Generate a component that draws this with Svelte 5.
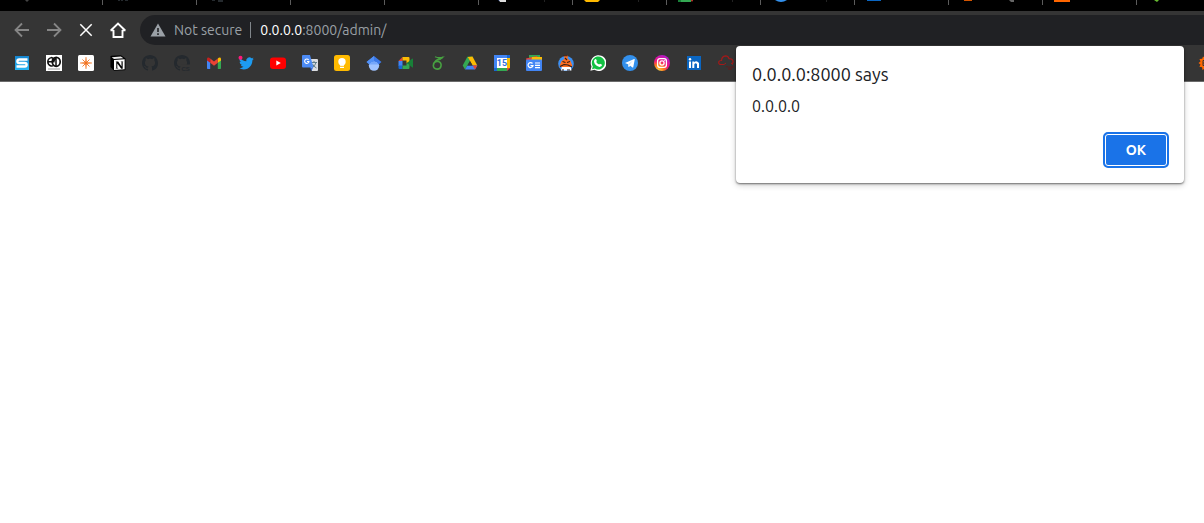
<script>
  const github = 'M8 0C3.58 0 0 3.58 0 8c0 3.54 2.29 6.53 5.47 7.59.4.07.55-.17.55-.38 0-.19-.01-.82-.01-1.49-2.01.37-2.53-.49-2.69-.94-.09-.23-.48-.94-.82-1.13-.28-.15-.68-.52-.01-.53.63-.01 1.08.58 1.23.82.72 1.21 1.87.87 2.33.66.07-.52.28-.87.51-1.07-1.78-.2-3.64-.89-3.64-3.95 0-.87.31-1.59.82-2.15-.08-.2-.36-1.02.08-2.12 0 0 .67-.21 2.2.82.64-.18 1.32-.27 2-.27s1.36.09 2 .27c1.53-1.04 2.2-.82 2.2-.82.44 1.1.16 1.92.08 2.12.51.56.82 1.27.82 2.15 0 3.07-1.87 3.75-3.65 3.95.29.25.54.73.54 1.48 0 1.07-.01 1.93-.01 2.2 0 .21.15.46.55.38A8.01 8.01 0 0 0 16 8c0-4.42-3.58-8-8-8z';

  const bookmarks = [
    ['SigmaStudio', '<defs><linearGradient id="sky" x2="0" y2="1"><stop stop-color="#1685cf"/><stop offset="1" stop-color="#27b5f5"/></linearGradient></defs><rect x="1" y="1" width="14" height="14" fill="url(#sky)"/><path d="M13.500 4.500H5.200Q3.400 4.500 3.400 6.200t1.800 1.800h5.600q1.800 0 1.800 1.800t-1.800 1.700H2.500" fill="none" stroke="#fff" stroke-width="2.400"/>'],
    ['Monogram', '<rect width="16" height="16" fill="#fff"/><g fill="none" stroke="#111"><ellipse cx="10.200" cy="6.800" rx="4" ry="4.500" stroke-width="1.700"/><path d="M7.500 10.500Q6.500 11.300 5 11 1.800 10 1.800 6.800T5.300 2.600Q8 2.800 7.800 6.800H2M8 6.500Q8 4 10 3v8" stroke-width="1.500"/></g><path d="M2 14h12" stroke="#999" stroke-width="1"/>'],
    ['Spark', '<rect width="16" height="16" rx="1.500" fill="#fff"/><path d="M8 2l.7 5.300L14 8l-5.300.7L8 14l-.7-5.300L2 8l5.300-.7z" fill="#f2711c" stroke="#f2711c" stroke-width=".4"/><path d="M4.500 4.500l7 7M11.500 4.500l-7 7" stroke="#f2711c" stroke-width=".9"/>'],
    ['Notion', '<path d="M.5 1.500Q.5.900 1.500.8L11 .3 15.500 3.500V14.300q0 .8-1 .9L4 15.800.5 12z" fill="#000"/><path d="M1.700 2.200 10.800 1.500 13.500 3.200 4 3.900z" fill="#eee"/><path d="M4 5 14.600 4.300v10L4 15z" fill="#fff"/><path d="M5.500 6.500h2.700l3.300 5V7l-1.200-.5h3.200l-.8.600v6.600h-1.500L7.300 8.500v4.300l1.200.600H5.500l.8-.6V7z" fill="#000"/>'],
    ['GitHub', `<path d="${github}" fill="#24292e"/>`],
    ['GitHub Classroom', `<path d="${github}" fill="#24292e"/><path d="M7 9.500H16V16H7z" fill="#353535"/><text x="7.500" y="15.500" font-size="6" font-weight="700" font-family="Liberation Sans, sans-serif" fill="#24292e">CS</text>`],
    ['Gmail', '<path d="M1 4v9.200q0 .8.800.8h2.400V7z" fill="#4285f4"/><path d="M11.800 7v7h2.400q.8 0 .8-.8V4z" fill="#34a853"/><path d="M11.800 3.600v4.200L15 5.400V4c0-1.700-1.700-2.300-3.200-.4z" fill="#fbbc04"/><path d="M4.200 7.800V3.600L8 6.500l3.800-2.900v4.200L8 10.700z" fill="#ea4335"/><path d="M1 4v1.400l3.200 2.400V3.600C2.700 1.700 1 2.300 1 4z" fill="#c5221f"/>'],
    ['Twitter', '<g transform="translate(1 1) scale(.62)"><path d="M23.950 4.570a10 10 0 0 1-2.820.770 4.960 4.960 0 0 0 2.160-2.720c-.95.560-2 .960-3.130 1.180a4.920 4.920 0 0 0-8.380 4.480C7.690 8.100 4.070 6.130 1.640 3.160a4.820 4.820 0 0 0-.67 2.470c0 1.710.87 3.210 2.190 4.100a4.900 4.900 0 0 1-2.230-.62v.06a4.920 4.920 0 0 0 3.950 4.830 5 5 0 0 1-2.210.08 4.940 4.940 0 0 0 4.600 3.420A9.870 9.870 0 0 1 0 19.540a14 14 0 0 0 7.560 2.210c9.050 0 14-7.500 14-13.980l-.02-.63a9.940 9.940 0 0 0 2.410-2.570z" fill="#1d9bf0"/></g><circle cx="2.500" cy="2.700" r="2" fill="#ff1979"/>'],
    ['YouTube', '<rect y="2.500" width="16" height="11.500" rx="3" fill="#f00"/><path d="M6.300 5.600v5L10.800 8z" fill="#fff"/>'],
    ['Translate', '<path d="M6 4h9q1 0 1 1v10q0 1-1 1h-5z" fill="#dadce0"/><path d="M9 7.500h6M12 6v1.500M14 7.500q-1 4-4 5M10.500 9q1 2.500 4 4" stroke="#607d8b" stroke-width="1" fill="none"/><path d="M8 12.500h3L9.500 16z" fill="#3267d6"/><path d="M1 0h7l3.500 12.500H1q-1 0-1-1V1q0-1 1-1z" fill="#4c8bf5"/><path d="M6.600 4.900A2.200 2.200 0 1 0 7 6.500H5" fill="none" stroke="#fff" stroke-width="1.100"/>'],
    ['Keep', '<rect width="16" height="16" rx="2.500" fill="#ffba00"/><circle cx="8" cy="6.700" r="3.700" fill="#fff"/><path d="M6 8h4v2.800H6zM6 11.700h4V13H6z" fill="#fff"/>'],
    ['Scholar', '<circle cx="8" cy="10.500" r="5.200" fill="#a0c3ff"/><path d="M8 1 .5 7 3.500 9.400Q5 6.500 8 6.500t4.500 2.900L15.500 7z" fill="#3b78e7"/><path d="M8 1 .5 7l3 2.400Q5 6.500 8 6.500z" fill="#5290f4"/><path d="M3.200 9.500Q5 6.500 8 6.500t4.800 3z" fill="#76a7fa"/>'],
    ['Meet', '<path d="M.5 6 4.500 2v4z" fill="#ea4335"/><path d="M.5 6h4v5h-4z" fill="#4285f4"/><path d="M.5 10.500h4V14h-3q-1 0-1-1z" fill="#1967d2"/><path d="M4.500 2h6q1 0 1 1v4l-3 1V5.500h-4z" fill="#fbbc04"/><path d="M4.500 10.500h4V8l3 1v4q0 1-1 1h-6z" fill="#34a853"/><path d="M9 8l5-4.300q1-.6 1 .3v8q0 1-1 .3z" fill="#188038"/>'],
    ['Overleaf', '<path d="M13 2.200C6.500 4 3.300 7 3.300 10.700a3.900 3.900 0 1 0 5-4.200Q6 6 4 8" fill="none" stroke="#47a141" stroke-width="1.600"/><path d="M5 1.800q4 1.600 8 .4Q10.500 5 7.500 5.200" fill="none" stroke="#47a141" stroke-width="1.200"/>'],
    ['Drive', '<path d="M5.500 1.500h5L8 6z" fill="#188038"/><path d="M5.500 1.500 8 6 3 14.500.7 10.500z" fill="#34a853"/><path d="M10.500 1.500 15.300 10.500h-4.700L5.700 2z" fill="#fbbc04"/><path d="M5.400 10.500h9.900l-2.300 4H3z" fill="#4285f4"/><path d="M10.600 10.500h4.700l-2.300 4z" fill="#ea4335"/><path d="M8 6l2.600 4.500H5.400z" fill="#353535"/>'],
    ['Calendar', '<path d="M0 0h16v12.500L12.500 16H0z" fill="#4285f4"/><path d="M13 3h3v10h-3z" fill="#fbbc04"/><path d="M0 13h13v3H0z" fill="#34a853"/><path d="M13 13h3l-3 3z" fill="#ea4335"/><path d="M13 0h3v3h-3zM0 13h3v3H0z" fill="#1967d2"/><path d="M3 3h10v10H3z" fill="#fff"/><text x="8" y="11.300" text-anchor="middle" font-size="9" font-weight="700" font-family="Roboto, sans-serif" fill="#2f6fe0">15</text>'],
    ['News', '<path d="M3 0h11v5H3z" fill="#34a853"/><path d="M0 3.500 11 1l2 6H1z" fill="#ea4335"/><path d="M6 2h10v5H5z" fill="#fbbc04"/><rect y="4.500" width="16" height="11.500" rx="1" fill="#4285f4"/><path d="M6.500 8.500A2.500 2.500 0 1 0 7 10.600H4.500M9 8h5M9 10.300h5M9 12.600h5" fill="none" stroke="#fff" stroke-width="1.200"/>'],
    ['Keybase', '<circle cx="8" cy="8.700" r="7.800" fill="#3b91f6"/><path d="M3 15.500 4 11h8.500l1 4.500z" fill="#fff"/><path d="M6 .5h4l-.5 3 3 2.500L14.500 11 13 12H3L1.500 11l2-5 3-2z" fill="#ff6f21"/><path d="M5.500.8h4M4.500 6.500l3 1M9 7.500l3-1M2 11.500l4-2 4 .5 4 2M4 15h2M9 15h3M7 3l2 2" fill="none" stroke="#331d16" stroke-width="1.100"/>'],
    ['WhatsApp', '<path d="M.4 15.700 1.500 11.600A7.900 7.900 0 1 1 4.400 14.800z" fill="#fff"/><path d="M2 14.200l.8-2.800A6.500 6.500 0 1 1 4.900 13.500z" fill="#12c143"/><path d="M5 4.200q.9-.5 1.300.3l.6 1.500-.7 1q1 1.800 2.900 2.600l.9-.9 1.700.9q.6.4-.1 1.500-2 1.700-4.900-.3Q4.300 9.200 4 6.700 3.900 5 5 4.200z" fill="#fff"/>'],
    ['Telegram', '<circle cx="8" cy="8" r="8" fill="#3390ec"/><path d="M3 8 12.200 4.100q.7-.2.5.7L11.300 12q-.2.900-.9.400L8.200 10.800 7 12q-.5.300-.6-.5L6 9.200z" fill="#fff"/><path d="M6.300 9.300 11 5.500 7.200 9.900 6.900 11.700z" fill="#bcdbf8"/>'],
    ['Instagram', '<defs><radialGradient id="insta" cx=".25" cy="1" r="1.100"><stop stop-color="#ffd84d"/><stop offset=".35" stop-color="#ff7a1a"/><stop offset=".6" stop-color="#f0147e"/><stop offset="1" stop-color="#a61bd3"/></radialGradient></defs><circle cx="8" cy="8" r="8" fill="url(#insta)"/><g fill="none" stroke="#fff" stroke-width="1.300"><rect x="3.600" y="3.600" width="8.800" height="8.800" rx="2.300"/><circle cx="8" cy="8" r="2.100"/></g><circle cx="10.700" cy="5.300" r=".6" fill="#fff"/>'],
    ['LinkedIn', '<path d="M1 1h14v14H1z" fill="#0a66c2"/><path d="M3 6.400h2V13H3zM6.300 6.400h2v.9q2.300-2.200 4.700.8V13h-2V9.300q-1.300-2.200-2.700 0V13h-2z" fill="#fff"/><circle cx="4" cy="4.200" r="1.200" fill="#fff"/>'],
    ['Cloud', '<path d="M6 9.500H3Q.7 9.500.7 7.500t2.800-2Q3.800 1.400 7.500.9q2.600 0 3.500 2.700 4 0 4.200 3.500L14 9" fill="none" stroke="#a31919" stroke-width="1.200"/><path d="M6 9.500l2-1.500M13 8l2 1.500" fill="none" stroke="#a31919" stroke-width="1"/><path d="M8 11.500q3 1 8 .5M10 14h4" fill="none" stroke="#5a2020" stroke-width="1.300"/>']
  ];

  const tabs = [
    ['GitHub tab', '<path d="M16 0h4l-2 2z" fill="#444"/>'],
    ['GitHub issues', '<path d="M15 0h2v1h-2zM22 0h3v1h-3zM18 0h2v1h-2z" fill="#252a2e"/>'],
    ['Classroom', '<path d="M15 0h3v1h-3zM21 0h5v2h-5z" fill="#252a2e"/>'],
    ['Page', ''],
    ['Page', ''],
    ['Translate', '<path d="M19 0h2l1 2z" fill="#4268c8"/><path d="M20 0h7v2h-6z" fill="#ddd"/><path d="M65 0h1v2h-1z" fill="#222"/>'],
    ['Keep', '<path d="M11 0h16l-2 2H13z" fill="#ffba00"/><path d="M65 0h1v2h-1z" fill="#222"/>'],
    ['Meet', '<path d="M11 0h13v2H12z" fill="#34a853"/><path d="M11 0h3v2h-3z" fill="#188038"/><path d="M24 0h2l-1 2z" fill="#ea4335"/><path d="M65 0h1v2h-1z" fill="#222"/>'],
    ['Telegram', '<path d="M14 0h12q-6 4-12 0z" fill="#3390ec"/><path d="M65 0h1v2h-1z" fill="#222"/>'],
    ['LinkedIn', '<path d="M12 0h14v1H12z" fill="#0a66c2"/>'],
    ['Notebook', '<path d="M15 0h8v1h-8z" fill="#d45500"/><path d="M60 0h5v2h-3z" fill="#666"/>'],
    ['Orange', '<path d="M11 0h16v2H11z" fill="#f60"/>'],
    ['Leaf', '<path d="M17 0h5l-2 2z" fill="#68bb32"/>']
  ];
</script>

<div class="browser">
  <ul class="tabs">
    {#each tabs as [name, art]}
      <li><svg viewBox="0 0 93 5" role="img" aria-label={name}>{@html art}</svg></li>
    {/each}
  </ul>

  <header>
    <nav class="toolbar" aria-label="Navigation">
      <button aria-label="Back" class="dim"><svg viewBox="0 0 16 16"><path d="M15 8H2M8 1.500 1.500 8 8 14.500" /></svg></button>
      <button aria-label="Forward" class="dim"><svg viewBox="0 0 16 16"><path d="M1 8h13M8 1.500 14.500 8 8 14.500" /></svg></button>
      <button aria-label="Stop"><svg viewBox="0 0 16 16"><path d="M2.300 2.300l11.400 11.400M13.700 2.300l-11.400 11.400" stroke-width="1.500" /></svg></button>
      <button aria-label="Home"><svg viewBox="0 0 16 16"><path d="M3.500 8v7h9V8M.8 8.500 8 1.500l7.200 7M.5 8.200h3M12.500 8.200h3" stroke-width="1.900" /></svg></button>
      <div class="omnibox">
        <svg class="warning" viewBox="0 0 16 14"><path d="M8 .5 15.500 13.500H.5z" fill="#9aa0a6" /><path d="M8 5v4M8 10.300v1.700" stroke="#202124" stroke-width="1.600" /></svg>
        <span class="status">Not secure</span>
        <a class="url" href="#address"><b>0.0.0.0</b>:8000/admin/</a>
      </div>
    </nav>

    <nav class="bookmarks" aria-label="Bookmarks">
      {#each bookmarks as [name, art]}
        <a href="#bookmark" aria-label={name}><svg viewBox="0 0 16 16">{@html art}</svg></a>
      {/each}
      <a class="last" href="#bookmark" aria-label="Gear"><svg viewBox="0 0 16 16"><path d="M8 1.500l1.300 2L11.500 2l.4 2.700 2.700.2L13.500 7l2 1.500-2 1 1 2.500-2.700.2-.4 2.500-2.200-1.300L8 15.500l-1.300-2L4.500 15l-.4-2.700-2.700-.5L2.500 9.500.5 8l2-1.500L1.500 4l2.700-.3L5 1.500l2 1.500z" fill="#f60" /><path d="M5 5.500v5M5 5.500h4M5 8h3M5 10.500h4" stroke="#353535" stroke-width="1" /></svg></a>
    </nav>
  </header>

  <div class="dialog" role="alertdialog" aria-labelledby="dialog-title" aria-describedby="dialog-message">
    <h1 id="dialog-title">0.0.0.0:8000 says</h1>
    <p id="dialog-message">0.0.0.0</p>
    <button class="ok">OK</button>
  </div>
</div>

<style>
  :global(body) {
    margin: 0;
    background: #fff;
  }
  .browser {
    position: relative;
    font-family: "Ubuntu", "Noto Sans", "Open Sans", sans-serif;
    min-height: 100vh;
    overflow: hidden;
  }
  .tabs {
    display: flex;
    height: 11px;
    margin: 0;
    padding: 0 0 0 8px;
    list-style: none;
    background: #000;
    overflow: hidden;
  }
  .tabs li {
    flex: 0 0 94px;
    box-sizing: border-box;
    height: 5px;
    border-left: 1px solid #5c5c5c;
  }
  .tabs li:first-child {
    border-color: transparent;
  }
  .tabs svg {
    display: block;
    width: 93px;
    height: 5px;
  }
  header {
    background: #353535;
    border-bottom: 1px solid #6b6b6b;
    overflow: hidden;
  }
  .toolbar {
    display: flex;
    align-items: center;
    gap: 16px;
    padding: 4px 0 0 14px;
  }
  .toolbar button {
    width: 16px;
    height: 16px;
    padding: 0;
    border: 0;
    background: none;
    color: #fff;
  }
  .toolbar .dim {
    color: #868686;
  }
  .toolbar button svg {
    display: block;
    width: 16px;
    height: 16px;
    fill: none;
    stroke: currentColor;
    stroke-width: 1.8;
  }
  .omnibox {
    flex: 1;
    display: flex;
    align-items: center;
    height: 30px;
    margin-left: -2px;
    padding-left: 10px;
    border-radius: 15px 0 0 15px;
    background: #202124;
    color: #9aa0a6;
    font-size: 14px;
    line-height: 16px;
  }
  .warning {
    width: 16px;
    height: 14px;
    margin-right: 8px;
  }
  .status {
    padding-right: 8px;
    border-right: 1px solid #80868b;
    white-space: nowrap;
  }
  .url {
    padding-left: 9px;
    color: #9aa0a6;
    text-decoration: none;
  }
  .url b {
    color: #fff;
    font-weight: 400;
  }
  .bookmarks {
    display: flex;
    gap: 16px;
    height: 16px;
    padding: 10px 0 10px 14px;
  }
  .bookmarks a {
    flex: 0 0 16px;
  }
  .bookmarks .last {
    margin-left: auto;
    margin-right: -10px;
  }
  .bookmarks svg {
    display: block;
    width: 16px;
    height: 16px;
  }
  .dialog {
    position: absolute;
    top: 46px;
    right: 20px;
    display: flex;
    flex-direction: column;
    box-sizing: border-box;
    width: 448px;
    padding: 16px 15px 15px 16px;
    border-radius: 4px;
    background: #fff;
    color: #202124;
    box-shadow: 0 1px 2px rgba(0, 0, 0, 0.5), 0 2px 6px rgba(0, 0, 0, 0.2);
  }
  h1 {
    margin: 0;
    font-size: 18px;
    font-weight: 400;
    line-height: 24px;
  }
  p {
    margin: 10px 0 16px;
    font-size: 16px;
    line-height: 20px;
  }
  .ok {
    align-self: flex-end;
    width: 66px;
    height: 36px;
    padding: 0;
    border: 2px solid #1a73e8;
    border-radius: 5px;
    box-shadow: inset 0 0 0 1px #fff;
    background: #1a73e8;
    color: #fff;
    font: 600 14px/20px "Ubuntu", "Noto Sans", "Open Sans", sans-serif;
  }
</style>
